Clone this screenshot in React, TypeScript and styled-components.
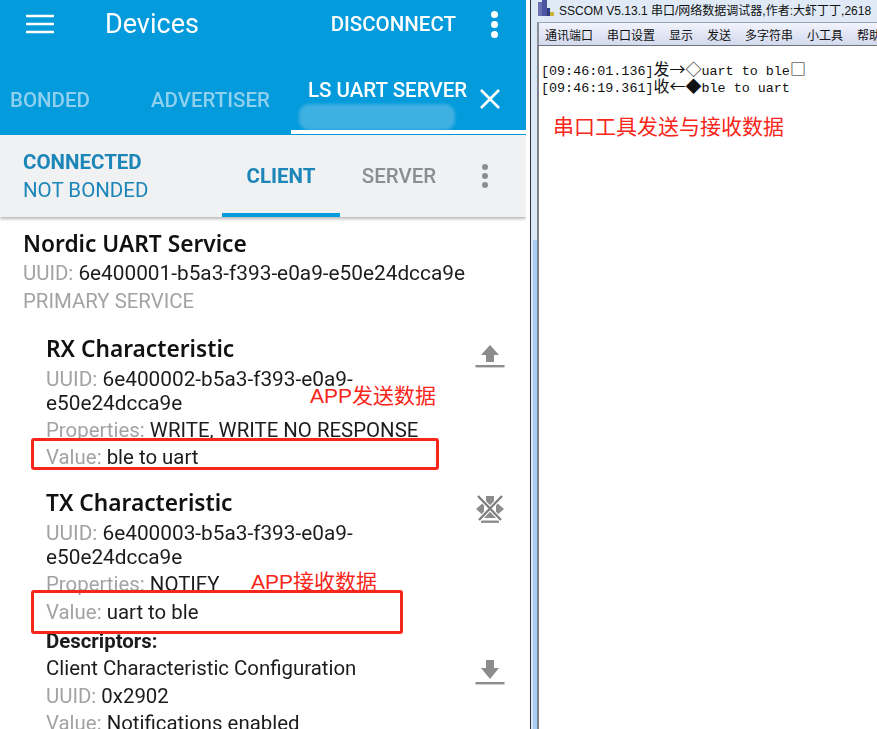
import styled, { createGlobalStyle } from "styled-components";

const Global = createGlobalStyle`
  html, body {
    margin: 0;
    padding: 0;
    background: #fff;
  }
  * {
    box-sizing: border-box;
  }
`;

const Page = styled.div`
  position: relative;
  display: flex;
  width: 877px;
  height: 729px;
  overflow: hidden;
  background: #fff;
`;

const Phone = styled.div`
  position: relative;
  flex: 0 0 526px;
  height: 729px;
  overflow: hidden;
  font-family: Roboto, "Liberation Sans", sans-serif;
  filter: blur(0.45px);
  background: #fff;
`;

const Header = styled.header`
  position: relative;
  height: 135px;
  background: #039bdb;
  color: #fff;
`;

const Toolbar = styled.div`
  display: flex;
  align-items: center;
  height: 48px;
  padding: 0 28px 0 26px;
`;

const Title = styled.div`
  font-size: 27px;
  margin-left: 51px;
  flex: 1;
`;

const Action = styled.div`
  font-size: 20.5px;
  font-weight: 500;
  margin-right: 35px;
`;

const Dots = styled.div<{ $color: string; $size: number }>`
  display: flex;
  flex-direction: column;
  gap: 3px;
  width: ${(p) => p.$size}px;
  & > i {
    display: block;
    width: ${(p) => p.$size}px;
    height: ${(p) => p.$size}px;
    border-radius: 50%;
    background: ${(p) => p.$color};
  }
`;

const TabStrip = styled.div`
  display: flex;
  align-items: center;
  height: 87px;
  padding-bottom: 3px;
`;

const DeviceTab = styled.div<{ $width: number; $inset?: number }>`
  width: ${(p) => p.$width}px;
  padding-left: ${(p) => p.$inset ?? 0}px;
  padding-top: 20px;
  font-size: 20.5px;
  font-weight: 500;
  color: #8ed0ee;
`;

const ActiveTab = styled.div`
  font-size: 20.5px;
  font-weight: 500;
  margin-left: 38px;
  width: 172px;
  color: #fff;
`;

const CloseSlot = styled.div`
  display: flex;
  margin-top: 18px;
`;

const Underline = styled.div`
  position: absolute;
  left: 291px;
  right: 0;
  bottom: 1px;
  height: 4px;
  background: #fff;
`;

const Smudge = styled.div`
  position: absolute;
  left: 299px;
  top: 104px;
  width: 156px;
  height: 26px;
  border-radius: 10px;
  background: #3fb0e2;
  filter: blur(1.5px);
`;

const StatusBar = styled.div`
  position: relative;
  display: flex;
  align-items: center;
  height: 82px;
  background: #eff1f2;
  box-shadow: 0 2px 3px rgba(0, 0, 0, 0.28);
  padding: 0 0 0 23px;
`;

const Status = styled.div`
  width: 199px;
  color: #1c86b9;
  font-size: 20.5px;
  line-height: 28px;
`;

const StatusStrong = styled.div`
  font-weight: 700;
`;

const ModeTab = styled.div<{ $active?: boolean }>`
  display: flex;
  align-items: center;
  justify-content: center;
  width: 118px;
  height: 82px;
  padding-top: 4px;
  font-size: 20.5px;
  font-weight: ${(p) => (p.$active ? 700 : 500)};
  color: ${(p) => (p.$active ? "#1c86b9" : "#8b8d8e")};
  border-bottom: 4px solid ${(p) => (p.$active ? "#039bdb" : "transparent")};
`;

const BarMenu = styled.div`
  margin-left: 24px;
`;

const Content = styled.div`
  padding: 11px 7px 0 23px;
`;

const Heading = styled.div`
  font-family: "Noto Sans", Roboto, sans-serif;
  font-size: 22.7px;
  font-weight: 600;
  line-height: 32px;
  color: #111;
`;

const Line = styled.div`
  font-size: 20.4px;
  line-height: 27.8px;
  color: #1c1c1c;
  white-space: nowrap;
`;

const Uuid = styled.span`
  font-size: 20.8px;
`;

const WrappedLines = styled.div`
  font-size: 20.8px;
  line-height: 24px;
  padding: 2px 0;
  color: #1c1c1c;
  white-space: nowrap;
`;

const Label = styled.span`
  color: #a3a3a3;
`;

const Strong = styled.div`
  font-size: 20.4px;
  font-weight: 700;
  line-height: 28px;
  color: #1c1c1c;
`;

const Characteristic = styled.section<{ $gap: number }>`
  position: relative;
  padding-left: 23px;
  margin-top: ${(p) => p.$gap}px;
`;

const IconSlot = styled.div<{ $top: number }>`
  position: absolute;
  right: 0;
  top: ${(p) => p.$top}px;
  width: 30px;
  height: 30px;
  margin-right: 14px;
  color: #8c8c8c;
`;

const Gutter = styled.div`
  flex: 0 0 8px;
  display: flex;
  flex-direction: column;
  border-left: 1px solid #2d3440;
  margin-left: 4px;
  background: #dbe9f7;
`;

const GutterTop = styled.div`
  height: 240px;
`;

const GutterThumb = styled.div`
  flex: 1;
  background: #a9cdf3;
  margin: 0 1px 0 2px;
`;

const Sscom = styled.div`
  flex: 1;
  min-width: 0;
  display: flex;
  flex-direction: column;
  font-family: "Noto Sans CJK SC", "Liberation Sans", sans-serif;
  background: #fff;
`;

const TitleBar = styled.div`
  display: flex;
  align-items: center;
  height: 22px;
  padding-bottom: 4px;
  background: #dfeaf6;
  margin-left: -1px;
  font-family: "Liberation Sans", "Noto Sans CJK SC", sans-serif;
  font-size: 12px;
  color: #111;
  white-space: nowrap;
  overflow: hidden;
`;

const AppIcon = styled.svg`
  flex: 0 0 16px;
  margin-left: 1px;
  margin-right: 5px;
`;

const MenuBar = styled.div`
  display: flex;
  gap: 14px;
  height: 23px;
  align-items: center;
  padding-left: 6px;
  border-left: 2px solid #8a8f96;
  border-top: 1px solid #9aa3b2;
  margin-left: -1px;
  background: linear-gradient(#f1f3fc, #d3d9ee);
  font-size: 12px;
  color: #111;
  white-space: nowrap;
  overflow: hidden;
`;

const Terminal = styled.div`
  flex: 1;
  margin-left: -1px;
  border-left: 2px solid #7d8288;
  border-top: 1px solid #6f747a;
  padding: 17px 0 0 2px;
  font-family: "Liberation Mono", "Noto Sans CJK SC", monospace;
  font-size: 13.4px;
  line-height: 17px;
  color: #111;
  white-space: nowrap;
`;

const Glyph = styled.span`
  font-family: "Noto Sans CJK SC", sans-serif;
  font-size: 16px;
  line-height: 0;
`;

const Note = styled.div<{ $x: number; $y: number }>`
  position: absolute;
  left: ${(p) => p.$x}px;
  top: ${(p) => p.$y}px;
  font-family: "Liberation Sans", "Noto Sans CJK SC", sans-serif;
  font-size: 21px;
  line-height: 25px;
  color: #f8261a;
  white-space: nowrap;
`;

const Highlight = styled.div<{ $x: number; $y: number; $w: number; $h: number }>`
  position: absolute;
  left: ${(p) => p.$x}px;
  top: ${(p) => p.$y}px;
  width: ${(p) => p.$w}px;
  height: ${(p) => p.$h}px;
  border: 3px solid #f8261a;
  border-radius: 3px;
`;

function Menu() {
  return (
    <svg width="28" height="20" viewBox="0 0 28 20" fill="none" stroke="#fff" strokeWidth="2.6">
      <path d="M0 2h28M0 10h28M0 18h28" />
    </svg>
  );
}

function Close() {
  return (
    <svg width="20" height="20" viewBox="0 0 20 20" fill="none" stroke="#fff" strokeWidth="2.6">
      <path d="M1 1l18 18M19 1L1 19" />
    </svg>
  );
}

function ThreeDots({ color, size }: { color: string; size: number }) {
  return (
    <Dots $color={color} $size={size}>
      <i />
      <i />
      <i />
    </Dots>
  );
}

function Upload() {
  return (
    <svg width="30" height="30" viewBox="0 0 30 30" fill="currentColor">
      <path d="M15 4l9 10h-5v7h-8v-7H6z" />
      <rect x="0.5" y="24" width="29" height="2.4" />
    </svg>
  );
}

function Download() {
  return (
    <svg width="30" height="30" viewBox="0 0 30 30" fill="currentColor">
      <path d="M11 3h8v8h5l-9 11-9-11h5z" />
      <rect x="0.5" y="25" width="29" height="2.4" />
    </svg>
  );
}

function IndicateOff() {
  return (
    <svg width="30" height="30" viewBox="0 0 30 30" fill="currentColor">
      <path d="M11 1h8v6l-4 4-4-4z" />
      <path d="M1 14l8-7v14z" />
      <path d="M29 14l-8-7v14z" />
      <path d="M15 13l8 10H7z" />
      <rect x="6" y="25.5" width="18" height="2.4" />
      <g fill="none" strokeLinecap="butt">
        <path d="M3 1l23 24M27 1L4 25" stroke="#fff" strokeWidth="4.5" />
        <path d="M3 1l23 24M27 1L4 25" stroke="#7c7c7c" strokeWidth="2.2" />
      </g>
    </svg>
  );
}

export default function App() {
  return (
    <Page>
      <Global />
      <Phone>
        <Header>
          <Toolbar>
            <Menu />
            <Title>Devices</Title>
            <Action>DISCONNECT</Action>
            <ThreeDots color="#fff" size={7} />
          </Toolbar>
          <TabStrip>
            <DeviceTab $width={151} $inset={10}>
              BONDED
            </DeviceTab>
            <DeviceTab $width={119}>ADVERTISER</DeviceTab>
            <ActiveTab>LS UART SERVER</ActiveTab>
            <CloseSlot>
              <Close />
            </CloseSlot>
          </TabStrip>
          <Smudge />
          <Underline />
        </Header>
        <StatusBar>
          <Status>
            <StatusStrong>CONNECTED</StatusStrong>
            NOT BONDED
          </Status>
          <ModeTab $active>CLIENT</ModeTab>
          <ModeTab>SERVER</ModeTab>
          <BarMenu>
            <ThreeDots color="#8b8d8e" size={6} />
          </BarMenu>
        </StatusBar>
        <Content>
          <Heading>Nordic UART Service</Heading>
          <Line>
            <Label>UUID:</Label> <Uuid>6e400001-b5a3-f393-e0a9-e50e24dcca9e</Uuid>
          </Line>
          <Line>
            <Label>PRIMARY SERVICE</Label>
          </Line>
          <Characteristic $gap={17}>
            <Heading>RX Characteristic</Heading>
            <WrappedLines>
              <Label>UUID:</Label> 6e400002-b5a3-f393-e0a9-
              <br />
              e50e24dcca9e
            </WrappedLines>
            <Line>
              <Label>Properties:</Label> WRITE, WRITE NO RESPONSE
            </Line>
            <Line>
              <Label>Value:</Label> ble to uart
            </Line>
            <IconSlot $top={8}>
              <Upload />
            </IconSlot>
          </Characteristic>
          <Characteristic $gap={15}>
            <Heading>TX Characteristic</Heading>
            <WrappedLines>
              <Label>UUID:</Label> 6e400003-b5a3-f393-e0a9-
              <br />
              e50e24dcca9e
            </WrappedLines>
            <Line>
              <Label>Properties:</Label> NOTIFY
            </Line>
            <Line>
              <Label>Value:</Label> uart to ble
            </Line>
            <Strong>Descriptors:</Strong>
            <Line>Client Characteristic Configuration</Line>
            <Line>
              <Label>UUID:</Label> 0x2902
            </Line>
            <Line>
              <Label>Value:</Label> Notifications enabled
            </Line>
            <IconSlot $top={8}>
              <IndicateOff />
            </IconSlot>
            <IconSlot $top={170}>
              <Download />
            </IconSlot>
          </Characteristic>
        </Content>
      </Phone>
      <Gutter>
        <GutterTop />
        <GutterThumb />
      </Gutter>
      <Sscom>
        <TitleBar>
          <AppIcon width="16" height="18" viewBox="0 0 16 18">
            <rect x="0" y="2" width="4" height="14" fill="#6d6fb5" />
            <rect x="4" y="0" width="5" height="16" fill="#4d55a0" />
            <rect x="9" y="8" width="3" height="8" fill="#2e3f7f" />
            <rect x="12" y="12" width="4" height="4" fill="#c9b53a" />
          </AppIcon>
          SSCOM V5.13.1 串口/网络数据调试器,作者:大虾丁丁,2618
        </TitleBar>
        <MenuBar>
          <span>通讯端口</span>
          <span>串口设置</span>
          <span>显示</span>
          <span>发送</span>
          <span>多字符串</span>
          <span>小工具</span>
          <span>帮助</span>
        </MenuBar>
        <Terminal>
          <div>
            [09:46:01.136]<Glyph>发→◇</Glyph>uart to ble<Glyph>□</Glyph>
          </div>
          <div>
            [09:46:19.361]<Glyph>收←◆</Glyph>ble to uart
          </div>
        </Terminal>
      </Sscom>
      <Highlight $x={31} $y={438} $w={408} $h={32} />
      <Highlight $x={31} $y={590} $w={372} $h={44} />
      <Note $x={310} $y={383}>
        APP发送数据
      </Note>
      <Note $x={251} $y={569}>
        APP接收数据
      </Note>
      <Note $x={553} $y={114}>
        串口工具发送与接收数据
      </Note>
    </Page>
  );
}
